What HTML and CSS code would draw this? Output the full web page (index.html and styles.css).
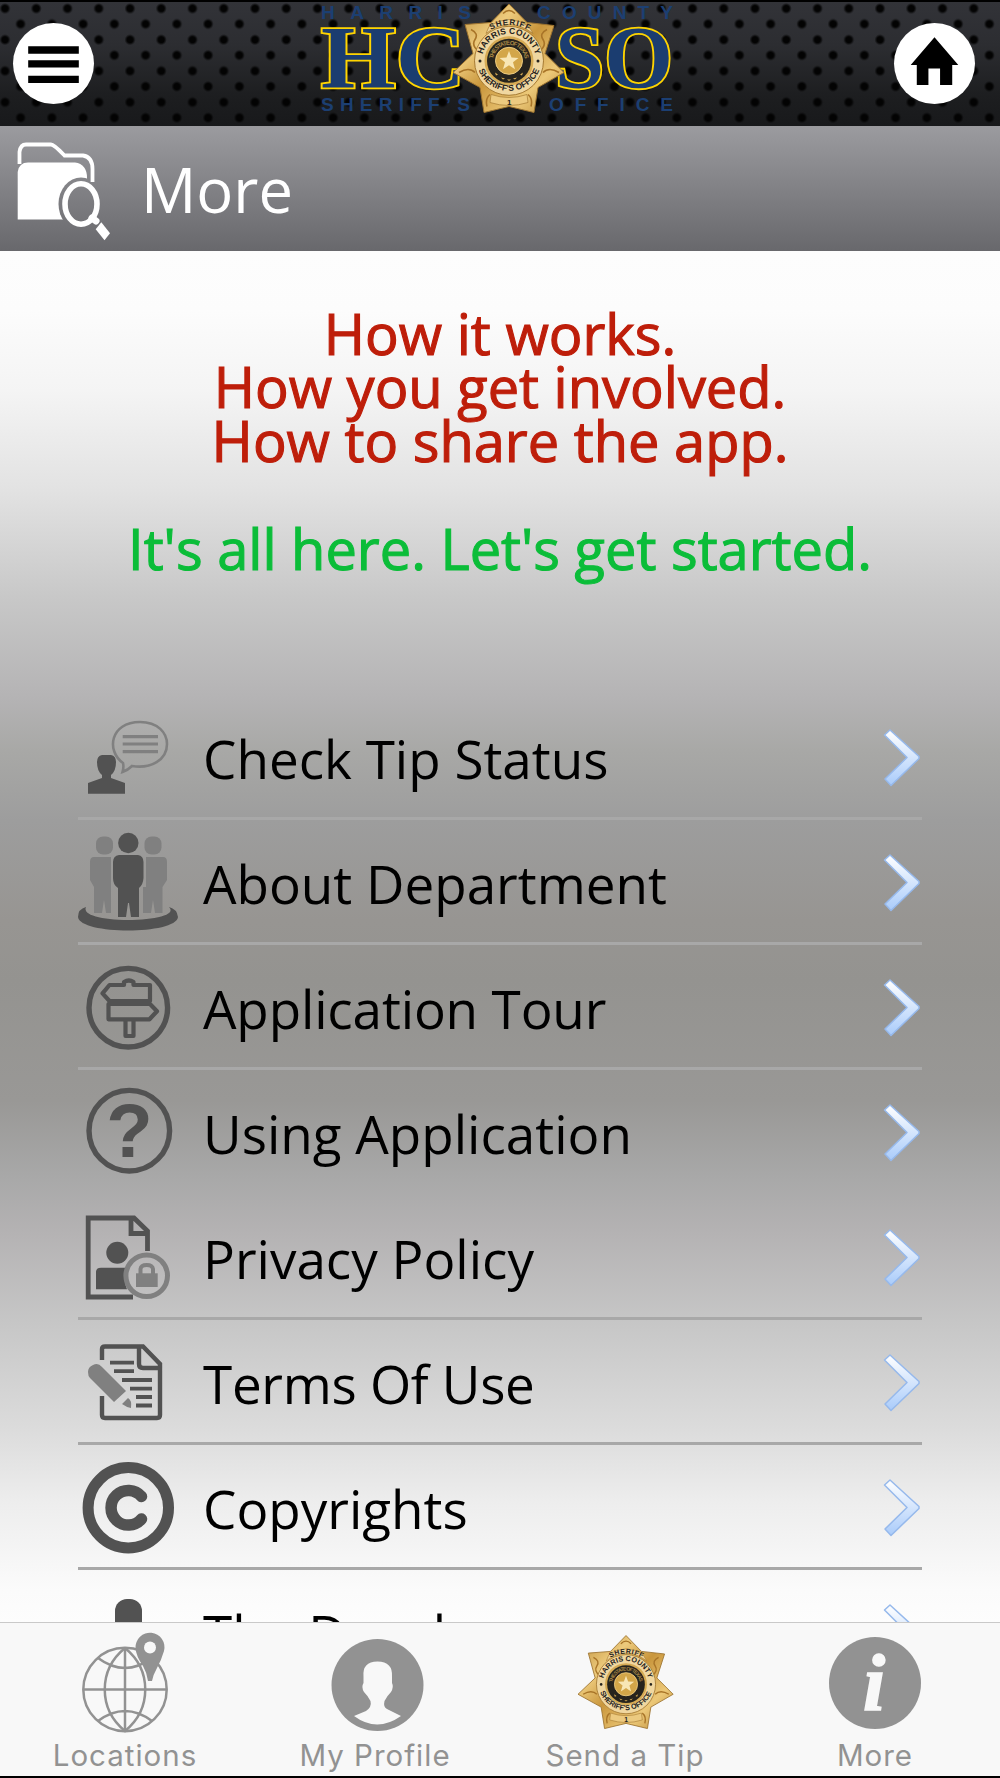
FILE: index.html
```html
<!DOCTYPE html>
<html lang="en">
<head>
  <meta charset="UTF-8" />
  <meta name="viewport" content="width=device-width, initial-scale=1.0"/>
  <title>More</title>
  <link rel="stylesheet" href="styles.css">
</head>
<body>

  <!-- shared shapes -->
  <svg class="defs" width="0" height="0">
    <defs>
      <linearGradient id="gold" x1="0" y1="0" x2="1" y2="1">
        <stop offset="0" stop-color="#b98a35"/>
        <stop offset="0.3" stop-color="#edca7c"/>
        <stop offset="0.5" stop-color="#c9963c"/>
        <stop offset="0.75" stop-color="#ecc878"/>
        <stop offset="1" stop-color="#b3822f"/>
      </linearGradient>
      <linearGradient id="ice" x1="0" y1="0" x2="0" y2="1">
        <stop offset="0" stop-color="#ffffff"/>
        <stop offset="1" stop-color="#a9cbfa"/>
      </linearGradient>
      <path id="arcTop" d="M29 57.3A27 27 0 0 1 83 57.3"/>
      <path id="arcBottom" d="M23.5 55A32.5 32.5 0 0 0 88.5 55"/>
      <path id="arcSheriff" d="M30 31Q56 12 82 31"/>
      <path id="arcState" d="M40 57.3A16 16 0 0 1 72 57.3"/>
    </defs>
    <symbol id="badge" viewBox="0 0 112 110">
      <path d="M56 .5L74 19L101 22L92 50L111 69L85 84L81 109L56 103L31 109L27 84L0 69L20 50L12 21L38 19Z" fill="url(#gold)" stroke="#9c7330" stroke-width="1"/>
      <path d="M18 26q8 4 4 10t4 12M94 26q-8 4-4 10t-4 12M6 69q10-6 16 0M106 69q-10-6-16 0M34 103q-2-8 3-12M78 103q2-8-3-12M50 10q6-6 12 0" fill="none" stroke="#a87428" stroke-width="1.6"/>
      <path d="M36 23Q56 9 76 23L80 30Q56 12 33 30Z" fill="#efd49a" stroke="#a67b33" stroke-width=".7"/>
      <circle cx="56" cy="57.3" r="34.5" fill="#f0d7a0" stroke="#a67b33" stroke-width="1"/>
      <circle cx="56" cy="57.3" r="24.5" fill="#d6ab55"/>
      <circle cx="56" cy="57.3" r="22" fill="#26231d"/>
      <circle cx="56" cy="57.3" r="13.5" fill="#d3a649" stroke="#edcb80" stroke-width="1"/>
      <path d="M56 47.5L58.5 54L65.5 54.4L60 58.8L62 65.8L56 61.8L50 65.8L52 58.8L46.500 54.4L53.500 54Z" fill="#f8e6b5"/>
      <path d="M38 91Q56 97 74 91L75 99Q56 105 37 99Z" fill="#ecca80" stroke="#a67b33" stroke-width=".7"/>
      <path d="M42 69l3 2-2 1zM48 74l4 1-2 1zM54 76h4l-2 1.500zM60 75l4-1-2 2zM67 71l3-2-1 3z" fill="#d6ab55"/>
      <text class="badge-text" font-size="8.500"><textPath href="#arcTop" textLength="72" startOffset="6.500">HARRIS COUNTY</textPath></text>
      <text class="badge-text" font-size="8.500"><textPath href="#arcBottom" textLength="78" startOffset="12">SHERIFF'S OFFICE</textPath></text>
      <text class="badge-text" font-size="8"><textPath href="#arcSheriff" textLength="40" startOffset="9">SHERIFF</textPath></text>
      <text class="badge-state" font-size="6"><textPath href="#arcState" textLength="46" startOffset="2">THE STATE OF TEXAS</textPath></text>
      <circle cx="27" cy="57.500" r="1.500" fill="#26231d"/>
      <circle cx="85" cy="57.500" r="1.500" fill="#26231d"/>
      <text class="badge-text" x="54" y="101" font-size="8">1</text>
    </symbol>
    <symbol id="chevron" viewBox="0 0 40 64">
      <path d="M8 5L2.500 10L25 32.500L3 54L9 60.500L37 33.500L37 31.500Z" fill="url(#ice)" stroke="#96b9ec" stroke-width="1.500" stroke-linejoin="round"/>
    </symbol>
  </svg>

  <header class="topbar">
    <button class="round-btn" aria-label="Menu">
      <svg viewBox="0 0 80 80"><path d="M15 23h50v7.300H15zM15 36.700h50V44H15zM15 52h50v7.300H15z"/></svg>
    </button>
    <svg class="logo" viewBox="310 0 380 126">
      <g class="logo-small">
        <text x="321" y="19" textLength="150">HARRIS</text>
        <text x="537" y="19" textLength="136">COUNTY</text>
        <text x="321" y="111" textLength="149">SHERIFF’S</text>
        <text x="549" y="111" textLength="124">OFFICE</text>
      </g>
      <g class="logo-big">
        <text x="321" y="87" textLength="144" lengthAdjust="spacingAndGlyphs">HC</text>
        <text x="555" y="87" textLength="118" lengthAdjust="spacingAndGlyphs">SO</text>
      </g>
      <use href="#badge" x="453" y="3.500" width="112" height="110"/>
    </svg>
    <button class="round-btn" aria-label="Home">
      <svg viewBox="0 0 80 80"><path d="M40 14L63.500 41.500H57.500V61.300H45.500V45H34V61.300H22.500V41.500H16.500Z"/></svg>
    </button>
  </header>

  <div class="titlebar">
    <svg class="title-icon" viewBox="0 0 96 100">
      <mask id="lens">
        <rect width="96" height="100" fill="#fff"/>
        <ellipse cx="64" cy="62" rx="22.500" ry="26.500" fill="#000"/>
      </mask>
      <path d="M2.500 22V10Q3.500 2.500 9 2.500H34Q37 2.500 47.500 13.500H66Q75.500 15 75.500 27V40" fill="none" stroke="#fff" stroke-width="3.800"/>
      <path d="M.7 77.500V30Q2 20.500 11 20.500H58Q70 22 70 36V77.500Z" fill="#fff" mask="url(#lens)"/>
      <ellipse cx="64" cy="62" rx="16" ry="20.300" fill="none" stroke="#fff" stroke-width="5.600"/>
      <path d="M75 76l4 3" stroke="#fff" stroke-width="7" stroke-linecap="round"/>
      <path d="M84.300 80.300L93 91.300L87.500 98.300L78.700 87.300Z" fill="#fff"/>
    </svg>
    <h1>More</h1>
  </div>

  <main class="content">
    <div class="intro">
      <p class="red">How it works.</p>
      <p class="red">How you get involved.</p>
      <p class="red">How to share the app.</p>
      <p class="green">It's all here. Let's get started.</p>
    </div>

    <ul class="menu">
      <li>
        <svg class="icon" viewBox="0 0 100 122">
          <path d="M19 67Q19 61 24 60H33Q38 61 38 67Q38 76 33 80V83L47 88V98.700H10V88L24 83V80Q19 76 19 67Z" fill="#525252"/>
          <path d="M45 68C28 56 32 27 62 27C80 27 89 38 89 49C89 65 73 74 54 71Q50 75 44.500 77Q46 72 45 68Z" fill="none" stroke="#808080" stroke-width="2.600"/>
          <path d="M44.700 41.700H80M44.700 49H80M44.700 56.700H80" stroke="#808080" stroke-width="3.200"/>
        </svg>
        <span>Check Tip Status</span>
        <svg class="arrow"><use href="#chevron"/></svg>
      </li>
      <li>
        <svg class="icon" viewBox="0 0 100 122">
          <g fill="#808080">
            <rect x="18" y="16.500" width="17" height="18" rx="7"/>
            <rect x="66.500" y="16.500" width="17" height="18" rx="7"/>
            <path d="M16 37H33V93H28L26 80L24 93H16V67L12 60V42Q12 37 16 37ZM68 37H85Q89 37 89 42V60L84.500 67V93H77L75 80L73 93H65V67H68Z"/>
          </g>
          <circle cx="50.300" cy="23" r="10.200" fill="#525252"/>
          <path d="M41 35H60Q65.500 36 65.500 42V58Q65 65 61 68V97H53L51 83H50L48 97H40V68Q35 65 35 58V42Q35 36 41 35Z" fill="#525252"/>
          <path d="M8 87Q0 89 0 97C2 115 98 115 100 97Q99 89 91 87C99 95 76 100 50 100S4 95 8 87Z" fill="#525252"/>
        </svg>
        <span>About Department</span>
        <svg class="arrow"><use href="#chevron"/></svg>
      </li>
      <li>
        <svg class="icon" viewBox="0 0 100 122">
          <g fill="none" stroke="#525252" stroke-linejoin="round">
            <circle cx="50.300" cy="62.700" r="39.300" stroke-width="5.400"/>
            <path d="M31.500 40H46V37Q51 34 55.500 37V40H72V56H31.500L24.500 48.300ZM30.500 59H72L79 66.200L71.500 74.300H30.500ZM47.500 75V91H55.500V75M51.300 54V61" stroke-width="4.200"/>
          </g>
        </svg>
        <span class="tour">Application Tour</span>
        <svg class="arrow"><use href="#chevron"/></svg>
      </li>
      <li class="no-line">
        <svg class="icon" viewBox="0 0 100 122">
          <circle cx="51.300" cy="60.700" r="40.300" fill="none" stroke="#525252" stroke-width="5.400"/>
          <text class="question" x="51.500" y="86.500" text-anchor="middle">?</text>
        </svg>
        <span>Using Application</span>
        <svg class="arrow"><use href="#chevron"/></svg>
      </li>
      <li>
        <svg class="icon" viewBox="0 0 100 122">
          <path d="M55 102H10.200V23H56L69.500 36V56M53 23V38.500H69.500" fill="none" stroke="#525252" stroke-width="4.800"/>
          <circle cx="39.300" cy="57.700" r="11" fill="#525252"/>
          <path d="M18 94.300V77Q18 72.700 23 72.700H50Q44 83 49 94.300Z" fill="#525252"/>
          <circle cx="68.700" cy="80.700" r="20.800" fill="none" stroke="#808080" stroke-width="5"/>
          <rect x="58" y="78.300" width="21.700" height="13.700" fill="#808080"/>
          <path d="M62.500 79V74Q63 70 68.700 70T75 74V79" fill="none" stroke="#808080" stroke-width="4"/>
        </svg>
        <span>Privacy Policy</span>
        <svg class="arrow"><use href="#chevron"/></svg>
      </li>
      <li>
        <svg class="icon" viewBox="0 0 100 122">
          <path d="M24 40V29Q24 26.500 27 26.500H65L82 44V95Q82 98 79 98H27Q24 98 24 95V76M61 27V44Q61 48 65 48H82" fill="none" stroke="#525252" stroke-width="4.400"/>
          <path d="M32 42.700H56M36 51.200H56M44 60H74M52 68.700H74M58 77H74M58 85.500H74" stroke="#525252" stroke-width="3.800"/>
          <path d="M10 52Q10 47 15 45Q20 42 24 47L48 71L36 82L12 58Q10 56 10 52ZM50 78Q54 80 53 88Q48 87 44 84Z" fill="#808080"/>
        </svg>
        <span class="terms">Terms Of Use</span>
        <svg class="arrow"><use href="#chevron"/></svg>
      </li>
      <li>
        <svg class="icon" viewBox="0 0 100 122">
          <circle cx="50.300" cy="62.700" r="40.200" fill="none" stroke="#525252" stroke-width="11"/>
          <path d="M63.500 51.500A17.300 17.300 0 1 0 63.500 74" fill="none" stroke="#525252" stroke-width="11.500" stroke-linecap="round"/>
        </svg>
        <span>Copyrights</span>
        <svg class="arrow"><use href="#chevron"/></svg>
      </li>
      <li>
        <svg class="icon" viewBox="0 0 100 122">
          <rect x="37" y="29" width="27" height="40" rx="12" fill="#525252"/>
        </svg>
        <span>The Developer</span>
        <svg class="arrow"><use href="#chevron"/></svg>
      </li>
    </ul>
  </main>

  <nav class="tabs">
    <a class="tab">
      <svg viewBox="0 0 110 110">
        <g fill="none" stroke="#929292" stroke-width="2.500">
          <circle cx="55" cy="66.500" r="41.700"/>
          <path d="M55 25V108M13 66.500H97M28 35Q55 55 82 35M28 98Q55 78 82 98"/>
          <path d="M55 25C28 47 28 86 55 108C82 86 82 47 55 25"/>
        </g>
        <path d="M65.500 25A14.500 14.500 0 1 1 94 28Q91 38 87 45Q83 52 82 58H78Q77 50 73 43Q66 33 65.500 25Z" fill="#929292"/>
        <circle cx="80" cy="24.500" r="6" fill="#f8f8f8"/>
      </svg>
      <span>Locations</span>
    </a>
    <a class="tab">
      <svg viewBox="0 0 110 110">
        <circle cx="57.500" cy="62" r="46" fill="#929292"/>
        <path d="M43.500 54Q42 38.500 57.500 38.500T72 54V60Q74 64 71 69Q67 73 64.500 78Q63 84 67 86L81 93Q57 110 34 93L46 88Q52 84 50.500 78Q48 73 44 69Q41 64 43.500 60Z" fill="#f8f8f8"/>
      </svg>
      <span>My Profile</span>
    </a>
    <a class="tab">
      <svg viewBox="0 0 110 110"><use href="#badge" x="8" y="12" width="96" height="94.500"/></svg>
      <span>Send a Tip</span>
    </a>
    <a class="tab">
      <svg viewBox="0 0 110 110">
        <circle cx="55" cy="60" r="46" fill="#929292"/>
        <text class="info" x="54" y="86.500" text-anchor="middle">i</text>
      </svg>
      <span>More</span>
    </a>
  </nav>

</body>
</html>
```

FILE: styles.css
```css
* {
  box-sizing: border-box;
}

body {
  margin: 0;
  width: 1000px;
  height: 1778px;
  display: flex;
  flex-direction: column;
  overflow: hidden;
  font-family: "Open Sans", "Noto Sans", sans-serif;
  background: #fff;
}

.defs {
  position: absolute;
}

/* header */
.topbar {
  height: 126px;
  flex: none;
  padding: 0 25px 2px 13px;
  display: flex;
  justify-content: space-between;
  align-items: center;
  border-top: 2px solid #000;
  background:
    radial-gradient(circle at 5px 6.5px, #030303 3px, rgba(0,0,0,0) 5.5px) 0 0 / 31.25px 31.25px,
    radial-gradient(circle at 20.6px 22px, #030303 3px, rgba(0,0,0,0) 5.5px) 0 0 / 31.25px 31.25px,
    linear-gradient(#323338, #2c2d31 35%, #1d1e20 75%, #18191b);
}

.round-btn {
  width: 81px;
  height: 81px;
  padding: 0;
  border: none;
  border-radius: 50%;
  background: #fff;
}

.round-btn svg {
  display: block;
  width: 100%;
  height: 100%;
}

.logo {
  width: 380px;
  height: 126px;
  margin: -1px 0 0 12px;
}

.logo-small {
  font: bold 19px "Liberation Sans", sans-serif;
  fill: #1c3f72;
}

.logo-big {
  font: bold 88px "Liberation Serif", serif;
  fill: #1b3d70;
  stroke: #ffd400;
  stroke-width: 3.6px;
  paint-order: stroke;
}

.badge-text {
  font-family: "Liberation Sans", sans-serif;
  font-weight: bold;
  fill: #26231d;
}

.badge-state {
  font-family: "Liberation Sans", sans-serif;
  font-weight: bold;
  fill: #a98845;
}

/* title */
.titlebar {
  height: 125px;
  flex: none;
  display: flex;
  align-items: center;
  padding-left: 17px;
  background: linear-gradient(#9b9b9f, #68686c);
}

.title-icon {
  width: 96px;
  height: 100px;
  margin-top: 6px;
}

.titlebar h1 {
  margin: 1px 0 0 28px;
  font-size: 61.5px;
  font-weight: 400;
  line-height: 84px;
  color: #fff;
}

/* page */
.content {
  flex: 1;
  min-height: 0;
  overflow: hidden;
  background: linear-gradient(#fdfdfd 0, #fcfcfc 60px, #f4f4f4 140px, #e2e2e2 240px, #c8c8c8 345px, #b4b3b4 448px, #a8a8a6 500px, #9d9d9d 570px, #979592 670px, #949390 730px, #999896 850px, #a8a8a8 925px, #b4b2b3 980px, #c6c6c6 1070px, #dcdcdc 1180px, #ededed 1250px, #fbfbfb 1340px, #fdfdfd 1371px);
}

.intro {
  height: 444px;
  padding-top: 56px;
  text-align: center;
}

.intro p {
  margin: 0;
  font-size: 56px;
  line-height: 53.3px;
  -webkit-text-stroke: 1.1px currentColor;
}

.red {
  color: #be1e0a;
}

.intro .green {
  margin-top: 55px;
  color: #0bbd39;
}

.menu {
  list-style: none;
  margin: 0 78px;
  padding: 0;
}

.menu li {
  height: 125px;
  display: flex;
  border-bottom: 3px solid #a8a8a8;
}

.menu li.no-line {
  border-color: transparent;
}

.icon {
  width: 100px;
  height: 122px;
  flex: none;
}

.menu span {
  flex: 1;
  margin-left: 25px;
  padding-top: 27px;
  font-size: 53px;
  line-height: 74px;
  color: #000;
  white-space: nowrap;
}

.menu .tour {
  letter-spacing: -0.15px;
}

.menu .terms {
  letter-spacing: -0.3px;
}

.arrow {
  width: 40px;
  height: 64px;
  margin: 30px 0 0;
}

.question {
  font: bold 76px "Liberation Sans", sans-serif;
  fill: #525252;
}

/* bottom tabs */
.tabs {
  height: 156px;
  flex: none;
  display: grid;
  grid-template-columns: repeat(4, 1fr);
  background: #f8f8f8;
  border-top: 1px solid #c9c9c9;
  border-bottom: 2px solid #000;
}

.tab {
  display: flex;
  flex-direction: column;
  align-items: center;
  font-family: Inter, sans-serif;
  font-size: 29.5px;
  line-height: 40px;
  letter-spacing: 1px;
  color: #929292;
}

.tab svg {
  width: 110px;
  height: 110px;
}

.tab span {
  margin-top: 2px;
}

.info {
  font: italic bold 80px "Liberation Serif", serif;
  letter-spacing: 0;
  fill: #f8f8f8;
  stroke: #f8f8f8;
  stroke-width: 1.5px;
}
```
